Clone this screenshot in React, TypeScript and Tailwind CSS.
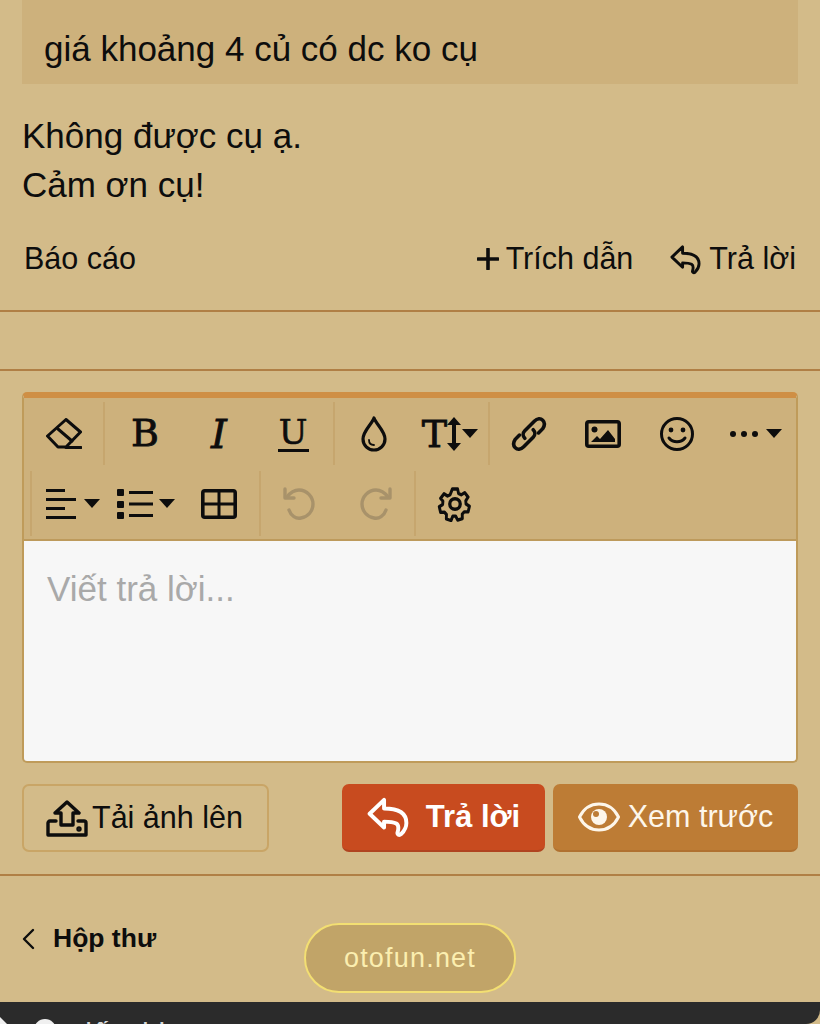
import React from "react";

const Sep = () => <div className="w-[2px] self-stretch bg-[#c6a66e]" />;

const Caret = () => (
  <svg width="16" height="9" viewBox="0 0 16 9" className="shrink-0">
    <path d="M0 0h16L8 9z" fill="#0d0d0d" />
  </svg>
);

const ReplyIcon = ({ size, color, width = 3 }: { size: number; color: string; width?: number }) => (
  <svg width={size} height={size} viewBox="0 0 32 32" fill="none" stroke={color} strokeWidth={width} strokeLinejoin="round" strokeLinecap="round">
    <path d="M2 13.500 13 3v6.500c9 0 17 2.500 17 11 0 3.500-1.500 6-4 8.500-1.500 1.300-3.200.4-2.700-1.300 1-3.500 1-5.500-1-6.700-2.300-1.300-5-1.500-9.300-1.500V24z" />
  </svg>
);

const TbBtn = ({ className, children }: { className: string; children: React.ReactNode }) => (
  <div className={`flex items-center justify-center h-full ${className}`}>{children}</div>
);

const Toolbar = () => (
  <div className="bg-[#cdb17c] border-b-2 border-[#bd9a5c] h-[143px] flex flex-col">
    <div className="flex h-[70px] pt-[4px] pb-[3px] items-stretch">
      <TbBtn className="w-[79px]">
        <svg width="36" height="32" viewBox="0 0 36 32" fill="none" stroke="#0d0d0d" strokeWidth="3" strokeLinejoin="round" strokeLinecap="round">
          <path d="M1.500 18 20 1.500 34.500 14 20 29H12z" />
          <path d="M12 11 26 23" />
          <path d="M20 29.500h15" />
        </svg>
      </TbBtn>
      <Sep />
      <TbBtn className="w-[80px] font-['DejaVu_Serif'] text-[38px] [-webkit-text-stroke:0.8px_#0d0d0d] text-[#0d0d0d]">B</TbBtn>
      <TbBtn className="w-[68px] font-['DejaVu_Serif'] italic text-[40px] [-webkit-text-stroke:0.8px_#0d0d0d] text-[#0d0d0d]">I</TbBtn>
      <TbBtn className="w-[80px]">
        <div className="flex flex-col items-center">
          <span className="font-['DejaVu_Serif'] text-[34px] leading-[34px] [-webkit-text-stroke:0.6px_#0d0d0d] text-[#0d0d0d]">U</span>
          <div className="w-[31px] h-[3px] bg-[#0d0d0d]" />
        </div>
      </TbBtn>
      <Sep />
      <TbBtn className="w-[77px]">
        <svg width="26" height="36" viewBox="0 0 26 36" fill="none" stroke="#0d0d0d" strokeWidth="3.200" strokeLinecap="round" strokeLinejoin="round">
          <path d="M13 2c2 6 11 13 11 21a11 11 0 0 1-22 0C2 15 11 8 13 2z" />
          <path d="M8 24c0 3 2 5 5 5" strokeWidth="1.800" />
        </svg>
      </TbBtn>
      <TbBtn className="w-[76px] gap-0">
        <span className="font-['DejaVu_Serif'] text-[38px] leading-none [-webkit-text-stroke:0.8px_#0d0d0d] text-[#0d0d0d]">T</span>
        <svg width="16" height="34" viewBox="0 0 16 34" fill="#0d0d0d" className="-ml-[1px] shrink-0">
          <path d="M8 0 15 8H10V26H15L8 34 1 26H6V8H1z" />
        </svg>
        <Caret />
      </TbBtn>
      <Sep />
      <TbBtn className="w-[78px]">
        <svg width="38" height="38" viewBox="0 0 36 36" fill="none" stroke="#0d0d0d" strokeWidth="3.400" strokeLinecap="round">
          <path d="M14 22c-2-2-2-5 0-7l9-9c3-3 6-3 8-1s2 5 0 8l-4 4" />
          <path d="M22 14c2 2 2 5 0 7l-9 9c-3 3-6 3-8 1s-2-5 0-8l4-4" />
        </svg>
      </TbBtn>
      <TbBtn className="w-[70px]">
        <svg width="36" height="28" viewBox="0 0 36 28" fill="none">
          <rect x="1.800" y="1.800" width="32.400" height="24.400" rx="2" stroke="#0d0d0d" strokeWidth="3.600" />
          <circle cx="9.500" cy="9.500" r="3" fill="#0d0d0d" />
          <path d="M6 22l6-6 3 3 8-9 7 9v3z" fill="#0d0d0d" />
        </svg>
      </TbBtn>
      <TbBtn className="w-[78px]">
        <svg width="36" height="36" viewBox="0 0 36 36" fill="none" stroke="#0d0d0d" strokeWidth="3">
          <circle cx="18" cy="18" r="15.500" />
          <circle cx="12" cy="14" r="2.400" fill="#0d0d0d" stroke="none" />
          <circle cx="24" cy="14" r="2.400" fill="#0d0d0d" stroke="none" />
          <path d="M10 22c4 5 12 5 16 0" strokeLinecap="round" />
        </svg>
      </TbBtn>
      <TbBtn className="w-[72px] gap-[8px] pl-[8px]">
        <div className="flex gap-[5px]">
          <div className="size-[6px] rounded-full bg-[#0d0d0d]" />
          <div className="size-[6px] rounded-full bg-[#0d0d0d]" />
          <div className="size-[6px] rounded-full bg-[#0d0d0d]" />
        </div>
        <Caret />
      </TbBtn>
    </div>
    <div className="flex h-[70px] pt-[3px] pb-[2px] pl-[6px] items-stretch">
      <Sep />
      <TbBtn className="w-[82px] gap-[8px]">
        <svg width="30" height="30" viewBox="0 0 30 30" fill="#0d0d0d" className="shrink-0">
          <rect y="0" width="19" height="3" />
          <rect y="9" width="30" height="3" />
          <rect y="18" width="19" height="3" />
          <rect y="27" width="30" height="3" />
        </svg>
        <Caret />
      </TbBtn>
      <TbBtn className="w-[64px] gap-[5px]">
        <svg width="37" height="30" viewBox="0 0 37 30" fill="#0d0d0d" className="shrink-0">
          <rect x="0" y="0" width="7" height="7" rx="1" />
          <rect x="0" y="12" width="7" height="7" rx="1" />
          <rect x="0" y="23" width="7" height="7" rx="1" />
          <rect x="12" y="2" width="24" height="3" />
          <rect x="12" y="13.500" width="24" height="3" />
          <rect x="12" y="25" width="24" height="3" />
        </svg>
        <Caret />
      </TbBtn>
      <TbBtn className="w-[81px]">
        <svg width="36" height="30" viewBox="0 0 36 30" fill="none" stroke="#0d0d0d">
          <rect x="1.800" y="1.800" width="32.400" height="26.400" rx="2" strokeWidth="3.600" />
          <path d="M1.500 15h33M18 1.500v27" strokeWidth="3" />
        </svg>
      </TbBtn>
      <Sep />
      <TbBtn className="w-[76px]">
        <svg width="36" height="36" viewBox="0 0 36 36" fill="none" stroke="#a8926a" strokeWidth="3.400" strokeLinecap="round" strokeLinejoin="round">
          <path d="M8 24c2 6 7 9 12 8 7-1 12-7 12-14S26 4 18 4c-5 0-9 3-12 7" />
          <path d="M4 3v9h9" />
        </svg>
      </TbBtn>
      <TbBtn className="w-[77px]">
        <svg width="36" height="36" viewBox="0 0 36 36" fill="none" stroke="#a8926a" strokeWidth="3.400" strokeLinecap="round" strokeLinejoin="round">
          <path d="M28 24c-2 6-7 9-12 8C9 31 4 25 4 18S10 4 18 4c5 0 9 3 12 7" />
          <path d="M32 3v9h-9" />
        </svg>
      </TbBtn>
      <Sep />
      <TbBtn className="w-[78px]">
        <svg width="36" height="36" viewBox="0 0 24 24" fill="none" stroke="#0d0d0d" strokeWidth="2.200" strokeLinejoin="round">
          <path d="M10 2h4l.7 3 2 .9 2.700-1.500 2.600 3-1.800 2.400.2 2.200 2.600 1.500-1 3.800-3-.1-1.500 1.500.1 3-3.600 1-1.500-2.600h-2.200L9 23l-3.600-1 .1-3L4 17.500l-3 .1-1-3.800 2.600-1.500.2-2.200L1 8.200l2.600-3 2.700 1.500 2-.9z" transform="translate(1.500 0) scale(.875 1)" />
          <circle cx="12" cy="12" r="3.500" />
        </svg>
      </TbBtn>
    </div>
  </div>
);

export default function App() {
  return (
    <div className="relative w-[820px] h-[1024px] overflow-hidden bg-[#d3bb89] font-['Liberation_Sans',sans-serif] text-[#0d0d0d]">
      <div className="mx-[22px] h-[84px] bg-[#cdb17c] pl-[22px] pt-[14px] flex items-center text-[35px]">
        giá khoảng 4 củ có dc ko cụ
      </div>

      <div className="mx-[22px] mt-[27px] text-[35px] leading-[49px]">
        <div>Không được cụ ạ.</div>
        <div>Cảm ơn cụ!</div>
      </div>

      <div className="mx-[24px] mt-[30px] h-[40px] flex items-center justify-between text-[30.500px]">
        <span>Báo cáo</span>
        <div className="flex items-center">
          <svg width="22" height="22" viewBox="0 0 22 22" className="mr-[7px]">
            <path d="M11 1v20M1 11h20" stroke="#0d0d0d" strokeWidth="3.600" strokeLinecap="round" />
          </svg>
          <span>Trích dẫn</span>
          <span className="ml-[37px] mr-[8px] flex"><ReplyIcon size={31} color="#0d0d0d" /></span>
          <span>Trả lời</span>
        </div>
      </div>

      <div className="mt-[31px] h-[2px] bg-[#b07f45]" />
      <div className="mt-[57px] h-[2px] bg-[#b07f45]" />

      <div className="mx-[22px] mt-[21px] h-[371px] rounded-[5px] overflow-hidden border-x-2 border-b-2 border-[#bf9b5a] border-t-[6px] border-t-[#cf8f45] bg-[#f7f7f7]">
        <Toolbar />
        <div className="px-[23px] pt-[28px] text-[35px] leading-[40px] text-[#a9a9a9]">Viết trả lời...</div>
      </div>

      <div className="mx-[22px] mt-[21px] h-[68px] flex items-stretch">
        <div className="w-[247px] rounded-[7px] border-2 border-[#c9a566] flex items-center pl-[22px] text-[30.500px] gap-[4px]">
          <svg width="42" height="37" viewBox="0 0 42 37" fill="none" stroke="#0d0d0d" strokeWidth="3.400" strokeLinejoin="round" strokeLinecap="round" className="shrink-0">
            <path d="M21 2 33 13H27V25H15V13H9z" />
            <path d="M10 21H4a2 2 0 0 0-2 2v12h38V23a2 2 0 0 0-2-2h-6" />
            <circle cx="33" cy="29" r="1" fill="#0d0d0d" />
          </svg>
          <span>Tải ảnh lên</span>
        </div>
        <div className="ml-[73px] w-[203px] rounded-[7px] bg-[#c84b1f] border-b-2 border-[#b04420] flex items-center justify-center gap-[17px] text-white font-bold text-[31px]">
          <ReplyIcon size={42} color="#ffffff" width={3} />
          <span>Trả lời</span>
        </div>
        <div className="ml-[8px] w-[245px] rounded-[7px] bg-[#bd7c35] border-b-2 border-[#b07130] flex items-center justify-center gap-[8px] text-[#fdf6ea] text-[30.500px]">
          <svg width="42" height="30" viewBox="0 0 42 30" fill="none" className="shrink-0">
            <path d="M1.500 15C6 6 13 2 21 2s15 4 19.500 13C36 24 29 28 21 28S6 24 1.500 15z" stroke="#fdf6ea" strokeWidth="3" strokeLinejoin="round" />
            <circle cx="21" cy="15" r="8" fill="#fdf6ea" />
            <circle cx="18" cy="12" r="3" fill="#bd7c35" />
          </svg>
          <span>Xem trước</span>
        </div>
      </div>

      <div className="mt-[22px] h-[2px] bg-[#b07f45]" />

      <div className="mx-[22px] mt-[45px] flex items-center gap-[18px] h-[36px] font-bold text-[26.500px]">
        <svg width="13" height="22" viewBox="0 0 13 22" fill="none" stroke="#0d0d0d" strokeWidth="2.400" strokeLinecap="round" strokeLinejoin="round" className="shrink-0">
          <path d="M11 2 2 11l9 9" />
        </svg>
        <span>Hộp thư</span>
      </div>

      <div className="absolute left-0 right-0 top-[1002px] h-[22px] bg-[#2b2b2b] rounded-br-[14px] overflow-hidden flex items-start pl-[34px] pt-[17px] gap-[12px] text-[#d8d8d8] text-[30px]">
        <svg width="8" height="8" viewBox="0 0 8 8" className="absolute left-0 top-[15px]">
          <path d="M0 0 7 7H0z" fill="#f0f0f0" />
        </svg>
        <div className="size-[22px] rounded-full bg-[#f0f0f0] shrink-0" />
        <span className="leading-[30px]">Tiếp thị</span>
      </div>

      <div className="absolute left-[304px] top-[923px] w-[212px] h-[70px] rounded-[35px] bg-[#c1a468] border-2 border-[#f3df72] flex items-center justify-center text-[#fbeeb0] text-[27px] tracking-[1.200px]">
        otofun.net
      </div>
    </div>
  );
}
